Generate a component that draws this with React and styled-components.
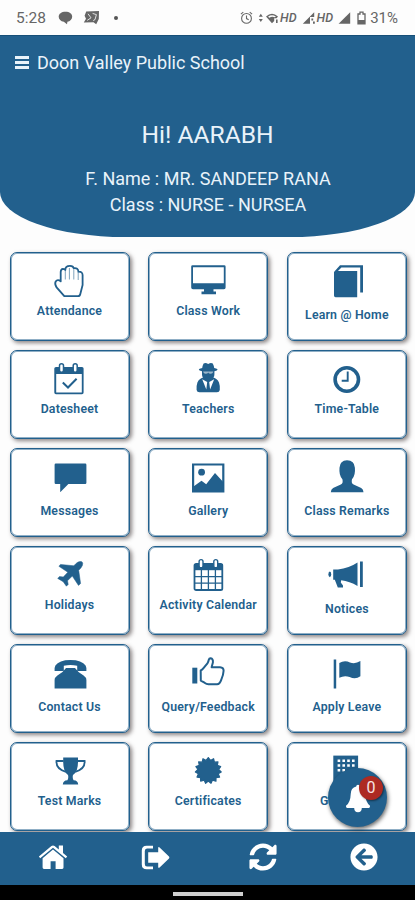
import styled, { createGlobalStyle } from "styled-components";
import { FaSyncAlt, FaArrowCircleLeft } from "react-icons/fa";

const starPoints = (cx, cy, outer, inner, teeth) =>
  Array.from({ length: teeth * 2 }, (_, i) => {
    const r = i % 2 ? inner : outer;
    const a = (Math.PI * i) / teeth - Math.PI / 2;
    return `${(cx + r * Math.cos(a)).toFixed(2)},${(cy + r * Math.sin(a)).toFixed(2)}`;
  }).join(" ");

const icons = {
  hand: (
    <g fill="none" stroke="currentColor" strokeWidth="1.8" strokeLinejoin="round">
      <path d="M14.3 33.2 L6.6 24.4 Q4.4 21 5.6 18.6 Q7.7 15.9 10.7 18.4 V9 Q10.7 6 13 5.8 Q15 5.8 15.3 7 Q15.3 2.9 20 2.9 Q23.3 2.9 23.6 5.2 Q28.2 4.4 28.4 8.6 Q32.5 8.4 32.6 12 V22 L30.3 31 Q29.9 33.2 28 33.2 Z" />
      <path d="M15.3 7 V16.5 M19.4 5 V16.5 M23.8 6 V16.5 M28.2 9 V17" strokeWidth="0.9" opacity="0.65" />
    </g>
  ),
  calendarCheck: (
    <g>
      <path fill="currentColor" fillRule="evenodd" d="M6 6 H32 Q33.6 6 33.6 7.6 V31.4 Q33.6 33.2 32 33.2 H6 Q4.3 33.2 4.3 31.4 V7.6 Q4.3 6 6 6 Z M6.2 13 V31.4 H31.8 V13 Z" />
      <rect x="9.5" y="2.8" width="4" height="8.4" rx="2" fill="#fff" stroke="currentColor" strokeWidth="1.5" />
      <rect x="23.2" y="2.8" width="4" height="8.4" rx="2" fill="#fff" stroke="currentColor" strokeWidth="1.5" />
      <path d="M12.8 21.5 L18 26.5 L26.6 17.8" fill="none" stroke="currentColor" strokeWidth="2" />
    </g>
  ),
  desktop: (
    <path fill="currentColor" fillRule="evenodd" d="M4.5 2.2 H36.2 Q37.6 2.2 37.6 3.6 V24.6 Q37.6 26.3 36 26.3 H25.5 V28.6 H28 V31.2 H13.5 V28.6 H16 V26.3 H5 Q3.2 26.3 3.2 24.6 V3.6 Q3.2 2.2 4.5 2.2 Z M5 4.2 V20.2 H35.8 V4.2 Z" />
  ),
  spy: (
    <g>
      <path fill="currentColor" d="M15.6 2.6 Q17.4 1.4 20.2 2.9 Q23 1.4 24.8 2.6 Q25.8 4.6 26.2 7 Q29.6 7.6 29.6 8.6 Q29.6 9.7 26.4 10.3 V13.6 Q26.4 15.6 25.4 16.6 Q29 17.5 31 21.5 Q32.2 25 31.8 29 Q31.4 31.3 29 31.3 H11.4 Q9 31.3 8.6 29 Q8.2 25 9.4 21.5 Q11.4 17.5 15 16.6 Q14 15.6 14 13.6 V10.3 Q10.8 9.7 10.8 8.6 Q10.8 7.6 14.2 7 Q14.6 4.6 15.6 2.6 Z" />
      <path fill="#fff" d="M15.2 10.6 H25.2 V11 Q24.6 13 22.6 12.8 Q20.8 12.6 20.2 11.4 Q19.6 12.6 17.8 12.8 Q15.8 13 15.2 11 Z" opacity="0.55" />
      <path fill="#fff" d="M14.2 18.2 L19.2 21 L18.3 28.5 Z M26.2 18.2 L21.2 21 L22.1 28.5 Z" />
    </g>
  ),
  book: (
    <g fill="currentColor">
      <path d="M7 9 L13 2.2 H36 V29.6 H33.2 V4.4 H14.4 L11 8 H30.2 V34.2 H8.6 Q7 34.2 7 32.5 Z" />
    </g>
  ),
  clock: (
    <g fill="none" stroke="currentColor">
      <circle cx="19.8" cy="18.5" r="11.7" strokeWidth="3.6" />
      <path d="M20.7 10.5 V19.8 H14.7" strokeWidth="1.9" />
    </g>
  ),
  message: <path fill="currentColor" d="M5.8 4.5 H35.2 Q36.4 4.5 36.4 5.7 V23.8 Q36.4 25 35.2 25 H18.4 L10.2 33.2 V25 H5.8 Q4.6 25 4.6 23.8 V5.7 Q4.6 4.5 5.8 4.5 Z" />,
  image: (
    <g fill="currentColor">
      <path fillRule="evenodd" d="M4 4.4 H36.4 V33.4 H4 Z M6.2 6.6 V31.2 H34.2 V6.6 Z" />
      <circle cx="13.6" cy="13.2" r="3.4" />
      <path d="M5.5 27.6 L13.5 21.8 L18.2 25.2 L27 14 L35.2 23 V32 H5.5 Z" />
    </g>
  ),
  person: (
    <path fill="currentColor" d="M12.5 8.8 Q13 1.3 20 1.3 Q27.4 1.3 27.9 8.8 Q28.6 16.4 25 20.3 Q24 24.4 26.6 25.6 L34.2 29.1 Q36.5 30.3 36.5 33.2 H3.8 Q3.9 30.3 6.1 29.1 L13.8 25.6 Q16.4 24.4 15.4 20.3 Q11.8 16.4 12.5 8.8 Z" />
  ),
  plane: (
    <path fill="currentColor" d="M31.8 4.7 Q33.4 5.6 32.4 8.4 Q31.6 10.5 28.7 13.3 L30.6 26.5 L28.5 28.4 L22.3 19.1 L17.5 23.7 L18.2 27.4 L16.4 29.2 L13.2 24.7 L7.7 21.4 L9.5 19.5 L13.3 20 L17.8 15.2 L8.9 9.3 L10.5 7.4 L23.8 8.8 Q28.3 3.4 31.8 4.7 Z" stroke="currentColor" strokeWidth="0.5" />
  ),
  calendar: (
    <g>
      <rect x="6.5" y="6.8" width="27.8" height="26.2" rx="1.6" fill="none" stroke="currentColor" strokeWidth="1.8" />
      <path fill="currentColor" d="M6 7 H35 V13.2 H6 Z" />
      <path d="M13.4 13 V33 M20.4 13 V33 M27.4 13 V33 M6 19.6 H35 M6 26.2 H35" stroke="currentColor" strokeWidth="1.3" />
      <rect x="11.1" y="2.6" width="3.9" height="8.2" rx="1.9" fill="#fff" stroke="currentColor" strokeWidth="1.4" />
      <rect x="25.8" y="2.6" width="3.9" height="8.2" rx="1.9" fill="#fff" stroke="currentColor" strokeWidth="1.4" />
    </g>
  ),
  bullhorn: (
    <g fill="currentColor">
      <ellipse cx="2.8" cy="17.3" rx="1.4" ry="2.9" />
      <path d="M6.2 12.5 H11 Q22 11.3 30.5 5.6 V28.9 Q22.6 24.3 14.2 23.2 L13.8 25.6 L16 28.4 V30.6 H10.8 L7.8 22.8 H6.2 Z" />
      <rect x="33" y="4.5" width="2.8" height="25.5" />
    </g>
  ),
  phone: (
    <g fill="currentColor">
      <path d="M20.4 5 Q32 5 35.6 10.6 Q36.6 12.3 36.4 16 H27.2 V10.8 Q20.4 9.1 13.8 10.8 V16 H4.6 Q4.4 12.3 5.4 10.6 Q9 5 20.4 5 Z" />
      <path d="M16 12.9 H25 Q27.8 17.2 33.6 20.5 Q36.4 22.5 36.4 25 V33.5 H4.6 V25 Q4.6 22.5 7.4 20.5 Q13.2 17.2 16 12.9 Z" />
    </g>
  ),
  thumb: (
    <g>
      <rect x="4.3" y="12.7" width="5" height="15.8" fill="currentColor" />
      <path fill="none" stroke="currentColor" strokeWidth="2" strokeLinejoin="round" d="M12.7 15.4 Q14 14.9 15.7 12.8 L19.4 8.4 Q20.4 7 20.8 4.8 Q21.2 3.1 22.7 3.2 Q25.3 3.6 24.9 7.6 L23.6 12.2 H32 Q35.7 12.5 35.6 15.8 Q35.4 20 33.3 24.6 Q31.8 29.2 29 29.3 H20.5 Q18.5 29.3 16.5 27.7 L12.8 25.6 Z" />
    </g>
  ),
  flag: (
    <g fill="currentColor">
      <rect x="6.7" y="4.5" width="2.5" height="29" />
      <path d="M12.3 8 Q17.5 4.6 23 7.4 Q28 9.4 33.4 6 V21.2 Q28.5 25 22.6 22 Q17.5 20 12.3 22.7 Z" />
    </g>
  ),
  trophy: (
    <g>
      <path fill="currentColor" d="M13.2 4.6 H28 V9 Q28 18.7 23 22 Q22.2 24.8 23.6 27.3 Q28 27.5 28.2 31.6 H12.8 Q13 27.5 17.4 27.3 Q18.8 24.8 18 22 Q13.2 18.7 13.2 9 Z" />
      <path fill="none" stroke="currentColor" strokeWidth="1.8" d="M13.6 8 H6.5 Q5.8 16 16 18.8 M27.6 8 H34.6 Q35.3 16 25.2 18.8" />
    </g>
  ),
  certificate: <polygon fill="currentColor" stroke="currentColor" strokeWidth="1.2" strokeLinejoin="round" points={starPoints(20.3, 17.6, 13, 10.4, 15)} />,
  building: (
    <g>
      <rect x="6.3" y="2.6" width="24.8" height="32" fill="currentColor" />
      <path d="M10.6 7.8 H28.4 M10.6 12.5 H28.4 M10.6 17.2 H19" stroke="#fff" strokeWidth="2.6" strokeDasharray="2.6 2.2" />
    </g>
  ),
};

const tiles = [
  { label: "Attendance", icon: "hand" },
  { label: "Class Work", icon: "desktop" },
  { label: "Learn @ Home", icon: "book", low: true },
  { label: "Datesheet", icon: "calendarCheck" },
  { label: "Teachers", icon: "spy" },
  { label: "Time-Table", icon: "clock" },
  { label: "Messages", icon: "message", low: true },
  { label: "Gallery", icon: "image", low: true },
  { label: "Class Remarks", icon: "person", low: true },
  { label: "Holidays", icon: "plane" },
  { label: "Activity Calendar", icon: "calendar" },
  { label: "Notices", icon: "bullhorn", low: true },
  { label: "Contact Us", icon: "phone", low: true },
  { label: "Query/Feedback", icon: "thumb", low: true },
  { label: "Apply Leave", icon: "flag", low: true },
  { label: "Test Marks", icon: "trophy" },
  { label: "Certificates", icon: "certificate" },
  { label: "Gatepass", icon: "building" },
];

const StatusIcons = () => (
  <StatusRight>
    <svg width="13" height="14" viewBox="0 0 13 14" fill="none" stroke="currentColor" strokeWidth="1.1">
      <circle cx="6.5" cy="7.4" r="4.9" />
      <path d="M6.5 4.5 V7.6 L8.7 8.8 M0.9 3.2 L3.3 1.2 M12.1 3.2 L9.7 1.2" />
    </svg>
    <svg width="21" height="14" viewBox="0 0 21 14" fill="currentColor">
      <path d="M0.8 5.8 L2.8 2.8 L4.8 5.8 Z M0.8 8 H4.8 L2.8 11 Z" />
      <path d="M8 5.4 Q14 0.2 20 5.4 L18.6 7.2 H16.2 V10 L14 12.3 L8 5.4 Z M10 5.7 Q14 3 18 5.7 L16.6 6.3 Q14 5.2 11.4 6.8 Z" fillRule="evenodd" />
      <path d="M18 8.5 H19.6 V12 H18 Z" />
    </svg>
    <Hd>HD</Hd>
    <svg width="14" height="14" viewBox="0 0 14 14" fill="currentColor">
      <path d="M0.8 12.8 L12.2 1.2 V6 H8 V12.8 Z M9.4 7.4 H11.2 V9.4 H9.4 Z M11 10.6 H12.8 V12.8 H11 Z" />
    </svg>
    <Hd>HD</Hd>
    <svg width="13" height="14" viewBox="0 0 13 14" fill="currentColor">
      <path d="M0.6 12.8 L12.2 1.2 V12.8 Z" />
    </svg>
    <Battery width="9" height="14" viewBox="0 0 9 14">
      <path d="M1 3 H3 V1.2 H6 V3 H8 V12.8 H1 Z" fill="none" stroke="currentColor" strokeWidth="1.3" />
      <path d="M1 9 H8 V13 H1 Z" fill="currentColor" />
    </Battery>
    <Percent>31%</Percent>
  </StatusRight>
);

const App = () => {
  return (
    <Screen>
      <GlobalStyle />
      <StatusBar>
        <Time>5:28</Time>
        <ChatIcon width="15" height="14" viewBox="0 0 15 14" fill="currentColor">
          <path d="M7.5 0.8 C11.5 0.8 14.2 2.8 14.2 5.8 C14.2 8.5 12 10.4 9.4 10.8 L9 13.2 L5.8 10.8 C2.8 10.4 0.7 8.5 0.7 5.8 C0.7 2.8 3.5 0.8 7.5 0.8 Z" />
        </ChatIcon>
        <svg width="17" height="15" viewBox="0 0 17 15">
          <path fill="currentColor" d="M3.2 1.4 L16 1 L15.8 9 L13.2 14.2 L10.5 12.2 L0.8 12.6 L3 8.8 L1.6 5.8 Z" />
          <path d="M5 3.8 L8 7.8 L4.2 10.4 M9.6 3.4 L13.4 4.6 L12 9.6 L10.2 10.6" fill="none" stroke="#fff" strokeWidth="0.8" />
        </svg>
        <Dot />
        <StatusIcons />
      </StatusBar>
      <Header>
        <TitleRow>
          <Burger>
            <i />
            <i />
            <i />
          </Burger>
          <Title>Doon Valley Public School</Title>
        </TitleRow>
        <Greeting>Hi! AARABH</Greeting>
        <Details>
          <p>F. Name : MR. SANDEEP RANA</p>
          <p>Class : NURSE - NURSEA</p>
        </Details>
      </Header>
      <Grid>
        {tiles.map((tile) => (
          <Tile key={tile.label}>
            <TileIcon width="40" height="36" viewBox="0 0 40 36">
              {icons[tile.icon]}
            </TileIcon>
            <Label $low={tile.low}>{tile.label}</Label>
          </Tile>
        ))}
      </Grid>
      <Fab>
        <svg width="26" height="29" viewBox="0 0 26 29" fill="#fff">
          <path d="M11.2 2.5 Q11.2 0.8 13 0.8 Q14.8 0.8 14.8 2.5 Q20.2 3.6 20.3 10.2 Q20.5 18.2 25 21.8 Q25.4 23.8 23.8 24 H16.8 Q16.6 28.3 13 28.3 Q9.4 28.3 9.2 24 H2.2 Q0.6 23.8 1 21.8 Q5.5 18.2 5.7 10.2 Q5.8 3.6 11.2 2.5 Z" />
        </svg>
        <Badge>0</Badge>
      </Fab>
      <NavBar>
        <NavItem $w="105px">
          <svg width="30" height="26" viewBox="0 0 30 26" fill="#fff">
            <path d="M15 5.6 L25.5 14.2 V23.6 Q25.5 25 24.2 25 H17.6 V17.2 H12.6 V25 H6 Q4.6 25 4.6 23.6 V14.2 Z" />
            <path d="M0.9 12.6 L13.4 2 Q15 0.8 16.6 2 L20.8 5.5 V1.6 H25 V9 L29.2 12.6 L27.8 14.2 L15 3.8 L2.2 14.2 Z" />
          </svg>
        </NavItem>
        <NavItem $w="100px">
          <svg width="29" height="25" viewBox="0 0 29 25" fill="#fff">
            <path d="M12 0.8 H5.6 Q0.8 0.8 0.8 5.6 V19.4 Q0.8 24.2 5.6 24.2 H12 V21.5 H6 Q3.8 21.5 3.8 19 V6 Q3.8 3.5 6 3.5 H12 Z" />
            <path d="M7.2 7.2 H17.2 V3 Q17.2 1.4 18.6 2.5 L28 11.4 Q28.8 12.4 28 13.4 L18.6 22.4 Q17.2 23.5 17.2 21.9 V17.8 H7.2 Z" />
          </svg>
        </NavItem>
        <NavItem $w="115px">
          <FaSyncAlt size={28} />
        </NavItem>
        <NavItem $w="88px">
          <FaArrowCircleLeft size={28} />
        </NavItem>
      </NavBar>
      <GestureBar>
        <Pill />
      </GestureBar>
    </Screen>
  );
};

const blue = "#22608d";

const GlobalStyle = createGlobalStyle`
  body {
    margin: 0;
    background: #fdfdfd;
    font-family: Roboto, sans-serif;
  }
`;

const Screen = styled.div`
  position: relative;
  width: 415px;
  height: 900px;
  overflow: hidden;
  display: flex;
  flex-direction: column;
  background: #fdfdfd;
`;

const StatusBar = styled.div`
  flex: none;
  height: 35px;
  box-sizing: border-box;
  padding: 0 17px 0 16px;
  display: flex;
  align-items: center;
  color: #666;
`;

const Time = styled.span`
  width: 42px;
  font-size: 15.5px;
`;

const ChatIcon = styled.svg`
  margin-right: 10px;
`;

const Dot = styled.span`
  width: 4px;
  height: 4px;
  margin-left: 14px;
  border-radius: 50%;
  background: #555;
`;

const StatusRight = styled.div`
  margin-left: auto;
  display: flex;
  align-items: center;
  gap: 5px;
`;

const Hd = styled.span`
  font-size: 12.5px;
  font-weight: 500;
  font-style: italic;
  margin-left: -4px;
`;

const Battery = styled.svg`
  margin-left: 1px;
`;

const Percent = styled.span`
  font-size: 15px;
  margin-left: -1px;
`;

const Header = styled.header`
  flex: none;
  height: 202px;
  box-sizing: border-box;
  border-top: 1px solid #164f78;
  border-radius: 0 0 125px 125px / 0 0 45px 45px;
  background: ${blue};
  color: #e9f3fa;
  display: flex;
  flex-direction: column;
  align-items: center;
`;

const TitleRow = styled.div`
  align-self: stretch;
  display: flex;
  align-items: center;
  height: 22px;
  margin-top: 15px;
  padding-left: 15px;
`;

const Burger = styled.div`
  width: 14px;
  display: flex;
  flex-direction: column;
  gap: 2px;
  padding-top: 1px;
  i {
    height: 3px;
    background: #e9f3fa;
  }
`;

const Title = styled.span`
  margin-left: 8px;
  font-size: 18px;
`;

const Greeting = styled.div`
  margin-top: 47px;
  line-height: 30px;
  font-size: 24.6px;
`;

const Details = styled.div`
  margin-top: 16px;
  padding-left: 1px;
  text-align: center;
  font-size: 18px;
  line-height: 26px;
  p {
    margin: 0;
  }
`;

const Grid = styled.main`
  flex: 1;
  min-height: 0;
  padding: 15px 8px 0 9.5px;
  display: grid;
  grid-template-columns: repeat(3, 120px);
  grid-auto-rows: 88.5px;
  column-gap: 18.7px;
  row-gap: 9.6px;
  overflow: hidden;
`;

const Tile = styled.div`
  box-sizing: border-box;
  border: 1px solid ${blue};
  border-radius: 7px;
  background: #fff;
  box-shadow:
    inset 0 0 0 1px rgba(34, 96, 141, 0.5),
    2px 2px 4px rgba(60, 50, 50, 0.6);
  padding-top: 10px;
  display: flex;
  flex-direction: column;
  align-items: center;
  color: ${blue};
`;

const TileIcon = styled.svg`
  flex: none;
  display: block;
`;

const Label = styled.span`
  margin-top: ${(props) => (props.$low ? "8px" : "4px")};
  line-height: 16px;
  font-size: 12.3px;
  font-weight: 600;
  letter-spacing: 0.2px;
  white-space: nowrap;
`;

/* floats over the last tile */
const Fab = styled.button`
  position: absolute;
  left: 328px;
  top: 768px;
  width: 59px;
  height: 59px;
  padding: 1px 0 0;
  border: none;
  border-radius: 50%;
  background: ${blue};
  box-shadow: 1px 2px 4px rgba(0, 0, 0, 0.6);
  display: flex;
  align-items: center;
  justify-content: center;
`;

const Badge = styled.span`
  position: absolute;
  top: 8px;
  right: 4px;
  width: 24px;
  height: 24px;
  border-radius: 50%;
  background: #ad2a22;
  color: #f6e4e2;
  font-family: Roboto, sans-serif;
  font-size: 16px;
  line-height: 24px;
  text-align: center;
  box-shadow: 1px 1px 2px rgba(0, 0, 0, 0.45);
`;

const NavBar = styled.nav`
  flex: none;
  height: 53px;
  box-sizing: border-box;
  padding-bottom: 3px;
  background: ${blue};
  color: #fff;
  display: flex;
`;

const NavItem = styled.div`
  width: ${(props) => props.$w};
  display: flex;
  align-items: center;
  justify-content: center;
`;

const GestureBar = styled.div`
  flex: none;
  height: 15px;
  background: #000;
  display: flex;
  justify-content: center;
  align-items: flex-start;
`;

const Pill = styled.div`
  width: 70px;
  height: 4px;
  margin-top: 7px;
  background: #cfcfcf;
`;

export default App;
